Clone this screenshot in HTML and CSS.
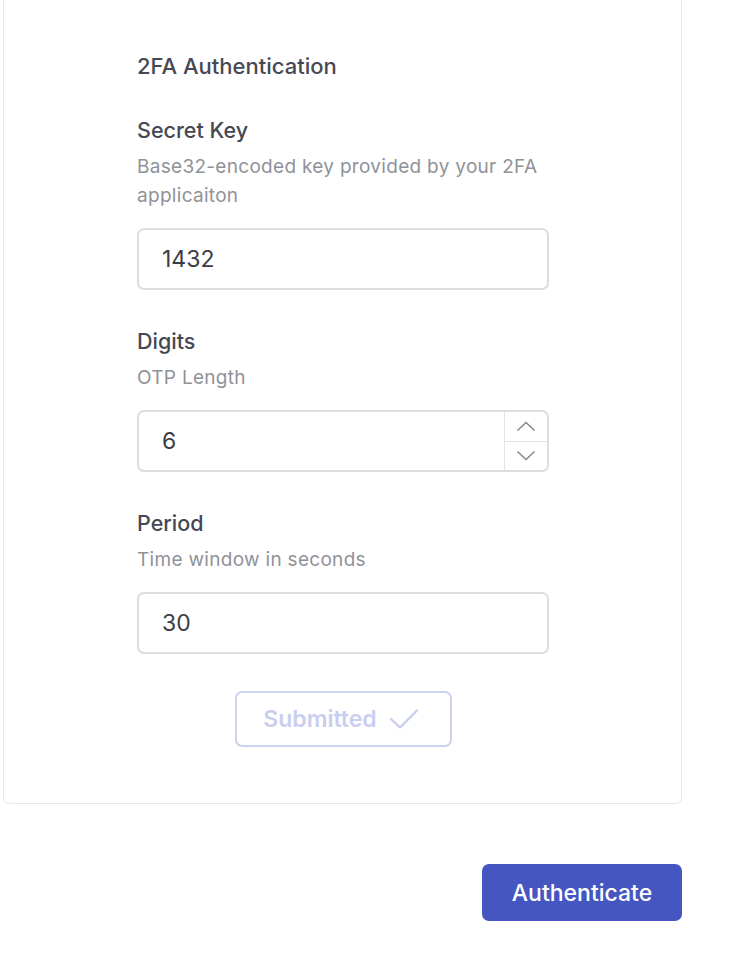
FILE: index.html
```html
<!DOCTYPE html>
<html lang="en">
<head>
<meta charset="utf-8">
<title>2FA Authentication</title>
<link rel="stylesheet" href="styles.css">
</head>
<body>
<div class="page">
  <div class="card">
    <form class="form">
      <h2 class="title">2FA Authentication</h2>
      <div class="field">
        <label class="label" for="secret">Secret Key</label>
        <p class="desc">Base32-encoded key provided by your 2FA applicaiton</p>
        <div class="control">
          <input class="input" id="secret" type="text" value="1432">
        </div>
      </div>
      <div class="field">
        <label class="label" for="digits">Digits</label>
        <p class="desc">OTP Length</p>
        <div class="control">
          <input class="input" id="digits" type="text" value="6">
          <div class="spinner">
            <span class="spin-btn"><svg viewBox="0 0 20 12" width="20" height="12"><path d="M2 10 L10 2.5 L18 10" fill="none" stroke="#8a8d93" stroke-width="1.7" stroke-linecap="round" stroke-linejoin="round"/></svg></span>
            <span class="spin-btn"><svg viewBox="0 0 20 12" width="20" height="12"><path d="M2 2 L10 9.5 L18 2" fill="none" stroke="#8a8d93" stroke-width="1.7" stroke-linecap="round" stroke-linejoin="round"/></svg></span>
          </div>
        </div>
      </div>
      <div class="field">
        <label class="label" for="period">Period</label>
        <p class="desc">Time window in seconds</p>
        <div class="control">
          <input class="input" id="period" type="text" value="30">
        </div>
      </div>
      <div class="actions">
        <button type="button" class="btn-submitted" disabled>Submitted
          <svg viewBox="0 0 30 22" width="30" height="22"><path d="M2 11 L11 19.5 L28 2.5" fill="none" stroke="#c9cef0" stroke-width="2.3" stroke-linecap="round" stroke-linejoin="round"/></svg>
        </button>
      </div>
    </form>
  </div>
  <div class="footer">
    <button type="button" class="btn-primary">Authenticate</button>
  </div>
</div>
</body>
</html>
```

FILE: styles.css
```css
* { box-sizing: border-box; }
html, body { margin: 0; padding: 0; background: #ffffff; }
body { font-family: Inter, "Noto Sans", "Liberation Sans", sans-serif; }

.page {
  width: 679px;
  margin-left: 3px;
}

.card {
  border: 1.5px solid #e6e8f0;
  border-top: none;
  border-radius: 0 0 6px 6px;
  padding: 52px 0 56px;
}

.form {
  width: 412px;
  margin: 0 0 0 133px;
  display: flex;
  flex-direction: column;
}

.title {
  margin: 0 0 36px;
  font-size: 22px;
  line-height: 28px;
  font-weight: 500;
  color: #464953;
}

.field {
  display: flex;
  flex-direction: column;
  margin-bottom: 37px;
}

.label {
  font-size: 21.5px;
  line-height: 28px;
  font-weight: 500;
  color: #454852;
}

.desc {
  margin: 8px 0 18px;
  font-size: 19px;
  letter-spacing: 0.3px;
  line-height: 29px;
  color: #8f9299;
}

.control {
  display: flex;
  height: 62px;
  border: 2px solid #dcdde0;
  border-radius: 7px;
  overflow: hidden;
}

.input {
  flex: 1;
  min-width: 0;
  border: none;
  outline: none;
  padding: 0 0 0 23px;
  font-family: inherit;
  font-size: 23px;
  color: #3a3d45;
  background: transparent;
}

.spinner {
  width: 43px;
  display: flex;
  flex-direction: column;
  border-left: 1.5px solid #e3e4e7;
}

.spin-btn {
  flex: 1;
  display: flex;
  align-items: center;
  justify-content: center;
}

.spin-btn + .spin-btn {
  border-top: 1.5px solid #e3e4e7;
}

.actions {
  display: flex;
  justify-content: center;
}

.btn-submitted {
  width: 217px;
  height: 56px;
  display: flex;
  align-items: center;
  justify-content: center;
  gap: 12px;
  border: 2px solid #cdd2f0;
  border-radius: 7px;
  background: #ffffff;
  font-family: inherit;
  font-size: 23px;
  font-weight: 600;
  color: #c9cef0;
  padding: 0 4px 0 0;
}

.footer {
  display: flex;
  justify-content: flex-end;
  margin-top: 60px;
}

.btn-primary {
  width: 200px;
  height: 57px;
  border: none;
  border-radius: 7px;
  background: #4656c0;
  color: #ffffff;
  font-family: inherit;
  font-size: 23px;
  font-weight: 500;
}
```
